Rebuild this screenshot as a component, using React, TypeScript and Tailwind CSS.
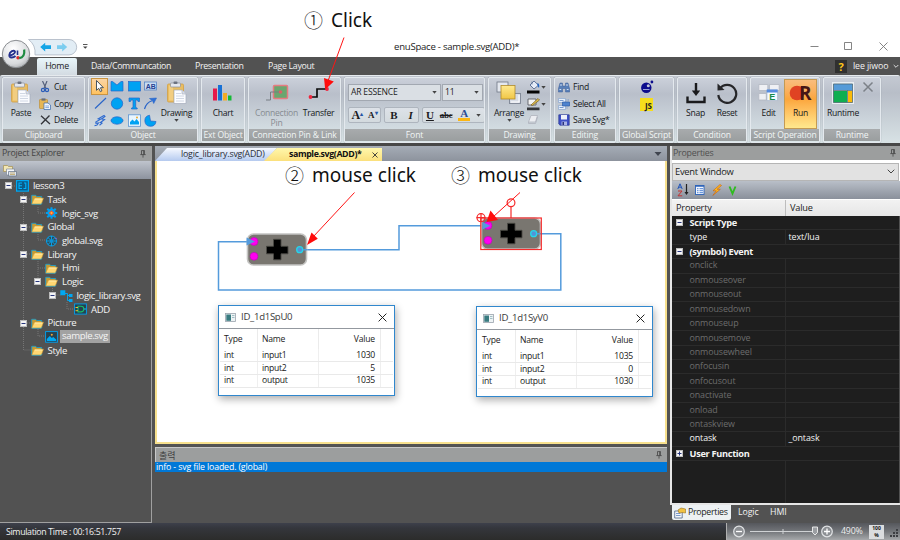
import React from "react";

type Kids = { children?: React.ReactNode };

/* ---------- icons ---------- */

const PasteIcon = () => (
  <svg width="22" height="24" viewBox="0 0 22 24">
    <rect x="1.5" y="3" width="16" height="18" rx="1.2" fill="#e9bd62" stroke="#d2a044" strokeWidth=".8" />
    <rect x="3" y="4.5" width="4" height="15" fill="#f2cd80" />
    <rect x="4.5" y="2" width="10" height="4" rx="1" fill="#e4e7ee" stroke="#8a8f9c" strokeWidth=".7" />
    <rect x="7.5" y=".6" width="4" height="2.4" rx="1" fill="#6c7280" />
    <path d="M8 9h8l4 4v9.500H8z" fill="#fbfcff" stroke="#a5acbb" strokeWidth=".7" />
    <path d="M16 9v4h4" fill="#d9deea" stroke="#a5acbb" strokeWidth=".6" />
    <path d="M10 12.500h5M10 15h8M10 17.500h8M10 20h8" stroke="#c7cedd" strokeWidth=".8" />
  </svg>
);

const CutIcon = () => (
  <svg width="10" height="12" viewBox="0 0 10 12">
    <path d="M2.500 0L6 7.500M7 0L4 7.500" stroke="#56617c" strokeWidth="1.200" fill="none" />
    <circle cx="3" cy="9" r="1.600" fill="none" stroke="#2a5cb8" strokeWidth="1.200" />
    <circle cx="7" cy="9" r="1.600" fill="none" stroke="#2a5cb8" strokeWidth="1.200" />
  </svg>
);

const CopyIcon = () => (
  <svg width="12" height="12" viewBox="0 0 12 12">
    <rect x=".5" y="1.500" width="8" height="9" rx=".6" fill="#e6b655" stroke="#b98a31" strokeWidth=".6" />
    <rect x="2.500" y=".4" width="4" height="2.200" fill="#676d7a" />
    <path d="M5 5h4l2.500 2v4.500H5z" fill="#f4f8ff" stroke="#3767a8" strokeWidth=".7" />
    <path d="M6.300 8h3.800M6.300 9.600h3.800" stroke="#5c8bcb" strokeWidth=".7" />
  </svg>
);

const DeleteIcon = () => (
  <svg width="11" height="10" viewBox="0 0 11 10">
    <path d="M1 .8L10 9M9.500 .5L1 9.300" stroke="#33353a" strokeWidth="1.300" fill="none" />
  </svg>
);

const Caret = ({ c = "#444" }: { c?: string }) => (
  <svg width="5" height="3" viewBox="0 0 5 3">
    <path d="M.3 0h4.400L2.500 2.800z" fill={c} />
  </svg>
);

const fillB = "#00a2f2";
const strokeB = "#2864c8";
const shapeIcons: React.ReactNode[] = [
  <path d="M4.500 1.500v9.800l2.300-2 1.600 3.400 1.500-.8-1.500-3.200h3z" fill="#fff" stroke="#345" strokeWidth=".9" />,
  <path d="M2 2.500h1.500L8 6l4-3.500h2v9.500H2z" fill={fillB} stroke={strokeB} strokeWidth=".7" />,
  <rect x="2.500" y="2.500" width="12" height="9.500" fill={fillB} stroke={strokeB} strokeWidth=".7" />,
  <g>
    <rect x="2.500" y="3" width="12" height="8" fill="#c9dcf1" stroke="#5884c6" strokeWidth=".8" />
    <text x="3.700" y="9.800" fontSize="7" fontWeight="700" fontFamily="Liberation Sans" fill="#243e92">AB</text>
  </g>,
  <path d="M3 12.500L14 2" stroke={strokeB} strokeWidth="1.100" />,
  <circle cx="8" cy="7.500" r="5.700" fill={fillB} stroke={strokeB} strokeWidth=".7" />,
  <path d="M3 2h10.500v3.500h-1.500L11.500 4H9.700v7.500l1.500.5v1H5.500v-1l1.500-.5V4H5l-.5 1.500H3z" fill={fillB} stroke={strokeB} strokeWidth=".7" />,
  <g>
    <path d="M2.500 13C4 8 6 6 10 4.800" fill="none" stroke={strokeB} strokeWidth="1.200" />
    <path d="M7.500 2.500L14.500 2l-2.800 5.500-1-2.600z" fill="#2b70d8" stroke={strokeB} strokeWidth=".6" />
  </g>,
  <path d="M2.500 12.800l2.500-.8 1.500-2-2.500.3L3.800 9 8.500 6.200 6.300 5.700 12 2.500l1 1L9.500 6l3 .5-4 3 1.500.7-2.500 2" fill="none" stroke="#2f6bd0" strokeWidth="1.100" />,
  <ellipse cx="8" cy="7.500" rx="6" ry="3.700" fill={fillB} stroke={strokeB} strokeWidth=".7" />,
  <g>
    <rect x="2.500" y="1.800" width="12" height="11.500" fill="#e8f6ff" stroke="#5c93ce" strokeWidth=".8" />
    <path d="M4 11.500V9l2.500-2.500 2 2L10.500 6l2.500 3v2.500z" fill={fillB} />
    <circle cx="11" cy="4.500" r="1" fill="#f0ab2c" />
  </g>,
  <path d="M7.500 2.200A5.600 5.600 0 1 0 14 8.500L8.500 8z" fill={fillB} stroke={strokeB} strokeWidth=".7" />,
];

const ChartIcon = () => (
  <svg width="22" height="18" viewBox="0 0 22 18">
    <path d="M1 4.500h4v12H1z" fill="#e6194b" />
    <path d="M6 1h4v15.500H6z" fill="#1771d6" />
    <path d="M11 9h4v7.500h-4z" fill="#f4ab23" />
    <path d="M16 11.500h3.500v5H16z" fill="#14ba34" />
  </svg>
);

const PinIcon = () => (
  <svg width="24" height="18" viewBox="0 0 24 18">
    <rect x="8.500" y="1.500" width="14" height="13" rx="1" fill="#6aa66f" stroke="#e67b80" strokeWidth="1.500" />
    <path d="M1 16h4.500V8H15" stroke="#777d83" strokeWidth="1" fill="none" />
    <circle cx="15.500" cy="8" r="1.800" fill="#db6167" />
  </svg>
);

const TransferIcon = () => (
  <svg width="22" height="14" viewBox="0 0 22 14">
    <path d="M2 11h7V3h9" stroke="#0b0b0b" strokeWidth="1.700" fill="none" />
    <circle cx="2.500" cy="11" r="1.900" fill="#f0243c" />
    <circle cx="19" cy="3" r="1.900" fill="#f0243c" />
  </svg>
);

const ArrangeIcon = () => (
  <svg width="26" height="24" viewBox="0 0 26 24">
    <defs>
      <linearGradient id="gold" x1="0" y1="0" x2="0" y2="1">
        <stop offset="0" stopColor="#ffe98f" />
        <stop offset="1" stopColor="#f0c645" />
      </linearGradient>
    </defs>
    <rect x="1" y="1" width="11" height="10" fill="#e4e8ef" stroke="#6f7785" strokeWidth=".8" />
    <rect x="13.500" y="12.500" width="11" height="10" fill="#d8dde6" stroke="#7c8492" strokeWidth=".9" />
    <path d="M15 21h8v-7" stroke="#fff" fill="none" />
    <rect x="5" y="4.500" width="14" height="13.500" fill="url(#gold)" stroke="#b18b2b" strokeWidth=".8" />
  </svg>
);

const FillIcon = () => (
  <svg width="13" height="14" viewBox="0 0 13 14">
    <path d="M3 5l4-4 4.500 4.200L7 9z" fill="#e4ebf7" stroke="#546a91" strokeWidth=".9" />
    <path d="M5 1.500v3" stroke="#546a91" strokeWidth=".8" />
    <path d="M10.500 3c2 .4 2 3 1.500 5-1-1-2-3-1.500-5z" fill="#1e63c4" />
    <path d="M0 10.500h12.500v3H0z" fill="#060606" />
  </svg>
);

const LineIcon = () => (
  <svg width="13" height="14" viewBox="0 0 13 14">
    <path d="M1 2h8v6H1z" fill="#f4f4f4" stroke="#5d6068" strokeWidth=".9" />
    <path d="M4 8l7-6.500 1.500 1.500-7 5.500z" fill="#e3c14c" stroke="#725d25" strokeWidth=".7" />
    <path d="M0 10.500h12.500v2.700H0z" fill="#34363a" />
  </svg>
);

const EffectIcon = () => (
  <svg width="12" height="11" viewBox="0 0 12 11">
    <path d="M4 1.500h6.500L8.500 8H1.500z" fill="#eceef2" stroke="#aeb3bc" strokeWidth=".8" />
    <path d="M1.500 8v1.500h7l2-6.500" fill="none" stroke="#aeb3bc" strokeWidth=".8" />
  </svg>
);

const FindIcon = () => (
  <svg width="12" height="11" viewBox="0 0 12 11">
    <path d="M2 1h2.500v3H7.500V1H10l1.700 6v3H7.500V6.500h-3V10H.3V7z" fill="#587fb8" stroke="#3f5f97" strokeWidth=".5" />
    <path d="M1.500 7.500h1.700M8.800 7.500h1.700M3 2v2M9 2v2" stroke="#dce9fb" strokeWidth=".9" />
  </svg>
);

const SelectAllIcon = () => (
  <svg width="12" height="12" viewBox="0 0 12 12">
    <path d="M.5 .5h7v4h-7zM.5 7.500h7v4h-7z" fill="#e6effb" stroke="#89a6ce" strokeWidth=".7" />
    <path d="M4.500 4h7v4h-7z" fill="#4e83ce" stroke="#2d5ca6" strokeWidth=".7" />
    <path d="M1.500 2.500h4M1.500 9.500h4" stroke="#6b91c8" strokeWidth=".9" />
    <path d="M9 1v2M10.500 1v2M9 9v2" stroke="#8aa6ce" strokeWidth=".7" />
  </svg>
);

const SaveIcon = () => (
  <svg width="12" height="12" viewBox="0 0 12 12">
    <path d="M.8 .8h10.400v10.400H2L.8 10z" fill="#3e50c6" stroke="#2a3690" strokeWidth=".7" />
    <path d="M3 1h6v4.500H3z" fill="#eef1fa" />
    <path d="M3.500 7.500h5.500v3.700H3.500z" fill="#aab4e6" />
    <path d="M4.500 8h1.500v3H4.500z" fill="#27307b" />
  </svg>
);

const LuaIcon = () => (
  <svg width="14" height="14" viewBox="0 0 14 14">
    <circle cx="6.300" cy="7.800" r="5.200" fill="#0c0c8c" />
    <circle cx="8.300" cy="5.700" r="1.500" fill="#c3c8d6" />
    <circle cx="11.900" cy="2" r="1.400" fill="#0c0c8c" />
    <path d="M3 9.500h6.500" stroke="#9aa0d6" strokeWidth="1.100" />
  </svg>
);

const SnapIcon = () => (
  <svg width="20" height="22" viewBox="0 0 20 22">
    <path d="M1.500 14.500v5.500h17v-5.500" stroke="#1a1a1c" strokeWidth="2.400" fill="none" />
    <path d="M10 1v9" stroke="#1a1a1c" strokeWidth="2.400" />
    <path d="M5.800 8.500h8.400L10 14z" fill="#1a1a1c" />
  </svg>
);

const ResetIcon = () => (
  <svg width="22" height="22" viewBox="0 0 22 22">
    <path d="M4 6.500A9 9 0 1 1 2.300 13" stroke="#262629" strokeWidth="2.200" fill="none" />
    <path d="M1.500 1.500L8.500 8l-7 .5z" fill="#262629" />
  </svg>
);

const EditIcon = () => (
  <svg width="22" height="20" viewBox="0 0 22 20">
    <path d="M.8 1.500h9v6h-9zM11.500 1.500h9.700v6h-9.700zM.8 10.500h7.500v6.500H.8z" fill="#eff0f4" stroke="#b3b8c1" strokeWidth=".8" />
    <path d="M9 7h10.500v10.500H9z" fill="#f4f9ff" stroke="#a6b4c8" strokeWidth=".6" />
    <path d="M8.700 6.500h11v3h-11z" fill="#568ce0" />
    <text x="11.200" y="17" fontSize="9" fontWeight="700" fontFamily="Liberation Sans" fill="#178a4a">E</text>
  </svg>
);

const RunIcon = () => (
  <svg className="overflow-visible" width="23" height="24" viewBox="0 -2 23 24">
    <circle cx="8" cy="10" r="7.300" fill="#e04323" />
    <text x="10" y="17.300" fontSize="20" fontWeight="700" fontFamily="Open Sans" textLength="12.500" lengthAdjust="spacingAndGlyphs" fill="#451616">R</text>
  </svg>
);

const RuntimeIcon = () => (
  <svg width="22" height="22" viewBox="0 0 22 22">
    <rect x=".5" y=".5" width="21" height="21" fill="#d8e2ea" stroke="#e9eef2" />
    <path d="M1.500 2h19v6h-19z" fill="#559bd8" />
    <path d="M1.500 9h13.500v11.500H1.500z" fill="#10ae50" />
    <path d="M16 9h4.500v11.500H16z" fill="#fbba08" />
    <path d="M1.500 2h19v18.500h-19zM1.500 8.500h19M15.500 8.500v12" stroke="#48606c" strokeWidth=".7" fill="none" />
  </svg>
);

const Pin = ({ c = "#444" }: { c?: string }) => (
  <svg width="6" height="8" viewBox="0 0 6 8">
    <path d="M1.500 .5v4M4.400 .5v4M1.500 .6h3M3.700 .6v4M.3 4.600h5.400M3 4.600v3" stroke={c} strokeWidth=".8" fill="none" />
  </svg>
);

const Folder = () => (
  <svg width="13" height="11" viewBox="0 0 13 11">
    <path d="M.7 9.700V1.300h4l1 1.200h5v2" fill="#c69a34" stroke="#1d9cc8" strokeWidth=".9" />
    <path d="M.8 10L3.300 4.200H12.500L10.300 10z" fill="#ffd773" stroke="#d49b2b" strokeWidth=".5" />
    <path d="M4 5h7.300" stroke="#fff3c0" strokeWidth=".8" />
    <path d="M.5 10.300h9.800l.8-1.500" stroke="#32b1d8" strokeWidth=".7" fill="none" />
  </svg>
);

const treeIcons: Record<string, React.ReactNode> = {
  root: (
    <svg width="13" height="12" viewBox="0 0 13 12">
      <rect x=".6" y=".6" width="11.800" height="10.500" fill="#0c5b86" stroke="#00a8f3" strokeWidth="1.200" />
      <path d="M6 3H3v5.500h3M3 5.700h3M8 3h1.800v5.500H7.500" stroke="#00b4ff" strokeWidth="1.100" fill="none" />
    </svg>
  ),
  folder: <Folder />,
  gear: (
    <svg width="13" height="12" viewBox="0 0 13 12">
      <path d="M6.500 .3v11.400M.8 6h11.400M2.300 1.800l8.400 8.400M10.700 1.800l-8.400 8.400" stroke="#009ff0" strokeWidth="2" />
      <circle cx="6.500" cy="6" r="4.200" fill="#009ff0" />
      <path d="M6.500 3.300L9.300 6 6.500 8.700 3.700 6z" fill="#f45b2a" />
      <circle cx="6.500" cy="6" r="1" fill="#ffc043" />
    </svg>
  ),
  globe: (
    <svg width="13" height="12" viewBox="0 0 13 12">
      <circle cx="6.500" cy="6" r="5" fill="#304a57" stroke="#00a2f2" strokeWidth="1" />
      <path d="M6.500 1v10M1.500 6h10M3 2.500l7 7M10 2.500l-7 7" stroke="#08a9ee" strokeWidth=".9" />
      <circle cx="6.500" cy="6" r="1.800" fill="#0c91d8" />
      <circle cx="11" cy="3.500" r=".8" fill="#9a5ad0" />
    </svg>
  ),
  lib: (
    <svg width="13" height="12" viewBox="0 0 13 12">
      <path d="M.3 .3h5v5h-5zM9 4h3.500v3H9zM9 9h3.500v3H9z" fill="#00a8f3" />
      <path d="M5 3.500h2.500v7H9M7.500 5.500H9" stroke="#00a8f3" strokeWidth=".9" fill="none" />
    </svg>
  ),
  gate: (
    <svg width="13" height="12" viewBox="0 0 13 12">
      <rect x=".6" y=".9" width="11.800" height="10.200" fill="#24414f" stroke="#00a2f2" strokeWidth=".9" />
      <path d="M4 3.300h3a2.800 2.800 0 0 1 0 5.600H4z" fill="none" stroke="#1abf6a" strokeWidth="1.100" />
      <path d="M1.500 4.500H4M1.500 7.700H4" stroke="#e8c534" strokeWidth="1" />
      <path d="M10 6h2" stroke="#16b4f5" strokeWidth="1" />
    </svg>
  ),
  pic: (
    <svg width="13" height="12" viewBox="0 0 13 12">
      <rect x=".6" y=".6" width="11.800" height="10.600" fill="#28424f" stroke="#00a2f2" strokeWidth=".9" />
      <path d="M1.800 10V8l3-3 2 2 1.500-1 2.900 2.500V10z" fill="#00a8f3" />
      <circle cx="6.800" cy="3.800" r="1" fill="#f0a93c" />
    </svg>
  ),
};

/* ---------- ribbon ---------- */

function Group({ w, title, children, last }: Kids & { w: string; title: string; last?: boolean }) {
  return (
    <section
      className={`${w} flex shrink-0 flex-col overflow-hidden rounded-[2px] border border-[#e4e9ee] bg-linear-to-b from-[#cbd0da] via-[#b9bfca] via-25% to-[#dce7ea] shadow-[0_0_1px_#7d838c] ${last ? "" : "mr-[3px]"}`}
    >
      <div className="flex h-[51px] px-[2px]">{children}</div>
      <div className="flex h-[12px] items-center justify-center whitespace-nowrap bg-linear-to-b from-[#a8abad] to-[#9a9e9f] text-[8.6px] font-medium leading-none tracking-[-0.16px] text-[#f1f5f5]">
        {title}
      </div>
    </section>
  );
}

function Big({ w, icon, label, drop, dim }: { w: string; icon: React.ReactNode; label: string; drop?: boolean; dim?: boolean }) {
  return (
    <div className={`${w} flex shrink-0 flex-col items-center ${dim ? "text-[#868b91]" : "font-medium text-[#15171a]"}`}>
      <div className="mt-[2px] flex h-[25px] items-center justify-center">{icon}</div>
      <div className="mt-[3px] text-center text-[8.6px] leading-[10px] tracking-[-0.28px]">{label}</div>
      {drop && <div className="mt-px flex"><Caret /></div>}
    </div>
  );
}

function Small({ icon, label }: { icon: React.ReactNode; label: string }) {
  return (
    <div className="flex h-[16.6px] items-center gap-[3px] whitespace-nowrap text-[8.6px] font-medium leading-none tracking-[-0.3px] text-[#15171a]">
      <span className="flex w-[12px] justify-center">{icon}</span>
      {label}
    </div>
  );
}

function FontBox({ w, children }: Kids & { w: string }) {
  return (
    <div className={`${w} flex h-[17px] items-center justify-between border border-[#a2a8b1] bg-[#dadfe4] pl-[2px] pr-[3px] text-[8.6px] leading-none tracking-[-0.2px] text-[#222]`}>
      {children}
      <Caret />
    </div>
  );
}

function FontButtons({ w, children }: Kids & { w: string }) {
  return (
    <div className={`${w} flex h-[16px] items-center justify-around rounded-[2px] border border-[#aeb5be] bg-linear-to-b from-[#dde2e8] to-[#d3dade] font-['Liberation_Serif',serif] text-[11px] font-bold leading-none text-[#1b1b1e]`}>
      {children}
    </div>
  );
}

function Ribbon() {
  return (
    <div className="flex h-[68px] rounded-t-[2px] border-t border-[#e6eaee] bg-linear-to-b from-[#c4c9d2] via-[#b8bec8] via-25% to-[#d8e2e5] pl-[2px] pt-px">
      <Group w="w-[83px]" title="Clipboard">
        <div className="w-[34px] shrink-0"><Big w="w-[32px]" icon={<PasteIcon />} label="Paste" /></div>
        <div className="pt-px">
          <Small icon={<CutIcon />} label="Cut" />
          <Small icon={<CopyIcon />} label="Copy" />
          <Small icon={<DeleteIcon />} label="Delete" />
        </div>
      </Group>
      <Group w="w-[110px]" title="Object">
        <div className="grid h-[51px] w-[67px] shrink-0 grid-cols-4 grid-rows-3">
          {shapeIcons.map((s, i) => (
            <span key={i} className={i === 0 ? "border border-[#c99443] bg-linear-to-b from-[#fbd5a5] to-[#ffc25e]" : "border border-transparent"}>
              <svg width="16" height="15" viewBox="0 0 16 15">{s}</svg>
            </span>
          ))}
        </div>
        <Big w="w-[37px]" icon={<PasteIcon />} label="Drawing" drop />
      </Group>
      <Group w="w-[44px]" title="Ext Object">
        <Big w="w-[38px]" icon={<ChartIcon />} label="Chart" />
      </Group>
      <Group w="w-[93px]" title="Connection Pin & Link">
        <Big w="w-[51px]" icon={<PinIcon />} label="Connection Pin" dim />
        <Big w="w-[33px]" icon={<TransferIcon />} label="Transfer" />
      </Group>
      <Group w="w-[141px]" title="Font">
        <div className="flex flex-col gap-[6px] pl-px pt-[6px]">
          <div className="flex gap-px">
            <FontBox w="w-[93px]">AR ESSENCE</FontBox>
            <FontBox w="w-[41px]">11</FontBox>
          </div>
          <div className="flex gap-[3px]">
            <FontButtons w="w-[33px]">
              <span className="text-[12px]">A<sup className="text-[6px] text-[#2554a4]">▴</sup></span>
              <span className="text-[9px]">A<sup className="text-[6px] text-[#2554a4]">▾</sup></span>
            </FontButtons>
            <FontButtons w="w-[35px]">
              <span>B</span>
              <span className="italic">I</span>
            </FontButtons>
            <FontButtons w="w-[63px]">
              <span className="underline">U</span>
              <span className="text-[9px] tracking-[-0.3px] line-through">abc</span>
              <span className="border-b-[3px] border-[#fbb614] px-[2px] leading-[9px] text-[#2b4c94]">A</span>
              <Caret />
            </FontButtons>
          </div>
        </div>
      </Group>
      <Group w="w-[63px]" title="Drawing">
        <Big w="w-[36px]" icon={<ArrangeIcon />} label="Arrange" drop />
        <div className="flex flex-col gap-[3px] pt-[2px]">
          <div className="flex items-center gap-px"><FillIcon /><Caret /></div>
          <div className="flex items-center gap-px"><LineIcon /><Caret /></div>
          <EffectIcon />
        </div>
      </Group>
      <Group w="w-[62px]" title="Editing">
        <div className="pl-px pt-px">
          <Small icon={<FindIcon />} label="Find" />
          <Small icon={<SelectAllIcon />} label="Select All" />
          <Small icon={<SaveIcon />} label="Save Svg*" />
        </div>
      </Group>
      <Group w="w-[55px]" title="Global Script">
        <div className="flex w-full flex-col items-center gap-[4px] pt-[2px]">
          <LuaIcon />
          <div className="flex h-[13px] w-[13px] items-end justify-end bg-[#f6dd1c] pr-px font-['Open_Sans',sans-serif] text-[8px] font-bold leading-[10px] text-[#222]">JS</div>
        </div>
      </Group>
      <Group w="w-[70px]" title="Condition">
        <Big w="w-[31px]" icon={<SnapIcon />} label="Snap" />
        <Big w="w-[32px]" icon={<ResetIcon />} label="Reset" />
      </Group>
      <Group w="w-[70px]" title="Script Operation">
        <Big w="w-[31px]" icon={<EditIcon />} label="Edit" />
        <div className="mt-px w-[33px] border border-[#c39a54] bg-linear-to-b from-[#f9bd7d] via-[#fba63c] via-40% to-[#ffe88d]">
          <div className="-mt-[2px] flex justify-center"><Big w="w-[31px]" icon={<RunIcon />} label="Run" /></div>
        </div>
      </Group>
      <Group w="w-[58px]" title="Runtime" last>
        <Big w="w-[34px]" icon={<RuntimeIcon />} label="Runtime" />
        <svg className="ml-[2px] mt-[3px]" width="12" height="12" viewBox="0 0 12 12">
          <path d="M1.500 1.500l9 9M10.500 1.500l-9 9" stroke="#7c8188" strokeWidth="1.500" />
        </svg>
      </Group>
    </div>
  );
}

/* ---------- window header ---------- */

function TitleBar() {
  return (
    <header className="flex h-[57px] items-end bg-white">
      <div className="flex h-[19px] w-[394px] items-start pl-[28px]">
        <svg width="62" height="18" viewBox="28 38 62 18">
          <path d="M28.500 39.500H69a7.700 7.700 0 0 1 0 15.400H35q1-10-6.500-15.400z" fill="#e2edf5" stroke="#b3bcc7" strokeWidth=".9" />
          <path d="M40.200 47l5-4.300v2.500H51v3.700h-5.800v2.500z" fill="#14a5e6" />
          <path d="M67.200 47l-5-4.300v2.500H57v3.700h5.200v2.500z" fill="#7ccdef" />
          <path d="M83 44.500h4.500" stroke="#444" strokeWidth=".9" />
          <path d="M83 46.500h4.500l-2.200 2.300z" fill="#444" />
        </svg>
      </div>
      <div className="h-[17px] w-[414px] whitespace-nowrap text-[9.6px] leading-[14px] tracking-[-0.25px] text-[#1c1c1c]">enuSpace - sample.svg(ADD)*</div>
      <svg width="86" height="18" viewBox="808 39 86 18">
        <path d="M810.500 46.500h8M844.500 42.500h7v7h-7zM879.500 42.500l8 8M887.500 42.500l-8 8" stroke="#777" strokeWidth=".9" fill="none" />
      </svg>
    </header>
  );
}

function TabStrip() {
  return (
    <nav className="flex h-[18px] items-center bg-[#525252] text-[8.8px] font-medium leading-none tracking-[-0.32px] text-[#f2f2f2]">
      <div className="ml-[37px] flex h-[17px] w-[40px] items-center justify-center self-end rounded-t-[2px] bg-linear-to-b from-[#e9f6fa] to-[#d3dbe2] text-[#1d1d1f]">Home</div>
      <span className="ml-[14px] w-[104px] whitespace-nowrap">Data/Communcation</span>
      <span className="w-[73px]">Presentation</span>
      <span className="w-[567px]">Page Layout</span>
      <div className="flex h-[13px] w-[12px] items-center justify-center bg-[#303030] text-[11px] font-bold text-[#ffc61a]">?</div>
      <span className="ml-[6px] whitespace-nowrap tracking-[-0.1px]">lee jiwoo</span>
      <svg className="ml-[5px]" width="6" height="5" viewBox="0 0 6 5"><path d="M.7 1L3 3.300 5.300 1" stroke="#ddd" fill="none" /></svg>
    </nav>
  );
}

/* ---------- project explorer ---------- */

type Node = { l: number; t: string; i: string; box?: boolean; sel?: boolean };
const tree: Node[] = [
  { l: 0, t: "lesson3", i: "root", box: true },
  { l: 1, t: "Task", i: "folder", box: true },
  { l: 2, t: "logic_svg", i: "gear" },
  { l: 1, t: "Global", i: "folder", box: true },
  { l: 2, t: "global.svg", i: "globe" },
  { l: 1, t: "Library", i: "folder", box: true },
  { l: 2, t: "Hmi", i: "folder" },
  { l: 2, t: "Logic", i: "folder", box: true },
  { l: 3, t: "logic_library.svg", i: "lib", box: true },
  { l: 4, t: "ADD", i: "gate" },
  { l: 1, t: "Picture", i: "folder", box: true },
  { l: 2, t: "sample.svg", i: "pic", sel: true },
  { l: 1, t: "Style", i: "folder" },
];
const indent = ["pl-[5px]", "pl-[19.500px]", "pl-[34px]", "pl-[48.500px]", "pl-[63px]"];

const Expander = ({ plus }: { plus?: boolean }) => (
  <svg className="shrink-0" width="7" height="7" viewBox="0 0 7 7">
    <rect x=".5" y=".5" width="6" height="6" fill="#f4f4f4" stroke="#bcbcbc" />
    <path d={plus ? "M1.500 3.500h4M3.500 1.500v4" : "M1.500 3.500h4"} stroke="#26357c" />
  </svg>
);

function ProjectExplorer() {
  return (
    <aside className="mr-[3px] flex w-[152px] shrink-0 flex-col border-b border-r border-[#a0a0a0] bg-[#525252]">
      <div className="flex h-[15px] items-center justify-between bg-[#9c9e9e] pl-[2px] pr-[5px] text-[8.800px] leading-none tracking-[-0.2px] text-[#444]">
        Project Explorer
        <Pin />
      </div>
      <div className="h-[18px] bg-linear-to-b from-[#bfc4cd] to-[#8d939e] pl-[3px] pt-[3px]">
        <svg width="14" height="13" viewBox="0 0 14 13">
          <path d="M.5 1.500h4l1 1h4v5h-9z" fill="#f2e6b5" stroke="#a58f50" strokeWidth=".7" />
          <path d="M3.500 5h8v6h-8z" fill="#f4f6fa" stroke="#7d8695" strokeWidth=".7" />
          <path d="M5.500 7.500h8v4.500h-8z" fill="#dfe6f0" stroke="#667183" strokeWidth=".7" />
          <path d="M7 9h5M7 10.500h5" stroke="#ba9a4d" strokeWidth=".7" />
        </svg>
      </div>
      <div className="relative">
        <svg className="absolute left-0 top-0" width="152" height="180" viewBox="0 0 152 180">
          <path d="M23.500 14v157H31M38 28v6h8M38 55v6h8M38 82v20M38 89h8M52.500 109v7h9M67 123v7h8M38 150v7h8M12 7h5M27 20h4M27 48h4M27 75h4M27 144h4" stroke="#808080" strokeWidth=".8" strokeDasharray="1 1" fill="none" />
        </svg>
        {tree.map((n) => (
          <div key={n.t} className={`relative flex h-[13.72px] items-center whitespace-nowrap text-[9.600px] leading-none tracking-[-0.38px] text-[#f4f4f4] ${indent[n.l]}`}>
            <span className="w-[11px] shrink-0">{n.box && <Expander />}</span>
            <span className="w-[15px] shrink-0">{treeIcons[n.i]}</span>
            <span className={n.sel ? "bg-[#a2a2a2] px-[2px] pb-[2px] pt-px" : "px-[2px]"}>{n.t}</span>
          </div>
        ))}
      </div>
    </aside>
  );
}

/* ---------- canvas ---------- */

const Block = ({ x, y }: { x: number; y: number }) => (
  <g transform={`translate(${x} ${y})`}>
    <rect x=".5" y=".5" width="59" height="31" rx="6" fill="#797670" stroke="#c4c4c2" strokeWidth="1.600" />
    <path d="M26.500 5.800h7.500v7h7v7.500h-7v6h-7.500v-6h-7v-7.500h7z" fill="#000" stroke="#494844" strokeWidth=".9" />
    <circle cx="7" cy="8" r="3.900" fill="#ff00f0" stroke="#c000b8" strokeWidth=".6" />
    <circle cx="7" cy="22.800" r="3.900" fill="#ff00f0" stroke="#c000b8" strokeWidth=".6" />
    <circle cx="52.700" cy="16.200" r="3" fill="#5294d8" stroke="#25d7e8" strokeWidth="1.300" />
  </g>
);

function DataWindow({ pos, title, rows }: { pos: string; title: string; rows: string[][] }) {
  return (
    <div className={`absolute ${pos} h-[91px] w-[177px] border border-[#3087cd] bg-white shadow-[1px_3px_8px_#0005]`}>
      <div className="flex h-[23px] items-center border-b border-[#93989f] pl-[6px] pr-[7px] text-[9.600px] leading-none tracking-[-0.3px] text-[#3a3a3a]">
        <svg className="mr-[5px]" width="11" height="9" viewBox="0 0 11 9">
          <rect x=".5" y=".5" width="10" height="8" fill="#eef3f5" stroke="#9aa4ad" strokeWidth=".8" />
          <rect x="1.300" y="1.500" width="4.700" height="6.300" fill="#397b80" />
          <path d="M7 2.500h2.500M7 4.500h2.500" stroke="#8db1b8" strokeWidth=".8" />
        </svg>
        {title}
        <svg className="ml-auto" width="9" height="9" viewBox="0 0 9 9"><path d="M.6 .6l7.800 7.800M8.400 .6L.6 8.400" stroke="#222" strokeWidth="1" /></svg>
      </div>
      <div className="mx-px flex h-[20px] items-center text-[8.6px] leading-none tracking-[-0.2px] text-[#222]">
        <span className="flex h-full w-[38px] items-center border-r border-[#ebebeb] pl-[4px]">Type</span>
        <span className="flex h-full w-[61px] items-center border-r border-[#ebebeb] pl-[4px]">Name</span>
        <span className="flex h-full w-[62px] items-center justify-end border-r border-[#ebebeb] pr-[5px]">Value</span>
      </div>
      {rows.map((r) => (
        <div key={r[1]} className="mx-px flex h-[12.900px] items-center border-b border-[#e9e9e9] text-[8.6px] leading-none tracking-[-0.25px] text-[#161616]">
          <span className="flex h-full w-[38px] items-center border-r border-[#efefef] pl-[4px]">{r[0]}</span>
          <span className="flex h-full w-[61px] items-center border-r border-[#efefef] pl-[4px]">{r[1]}</span>
          <span className="flex h-full w-[62px] items-center justify-end border-r border-[#efefef] pr-[5px]">{r[2]}</span>
        </div>
      ))}
    </div>
  );
}

function Canvas() {
  return (
    <div className="relative h-[283px] border-2 border-t-0 border-[#f7e08d] bg-white">
      <svg className="absolute left-0 top-0" width="509" height="280" viewBox="157 161 509 280">
        <g fill="none" stroke="#549bdc" strokeWidth="1.500">
          <path d="M541 233.800h19.800v56.200H218.500v-48.300h30" />
          <path d="M303 249.700h96v-24h85" />
        </g>
        <Block x={247} y={233.500} />
        <Block x={481} y={217.500} />
        <path d="M246.500 237.600l8.500 4-8.500 4zM482.500 222l8 3.800-8 3.800z" fill="#549bdc" />
        <path d="M303 249.700h4M537 233.800h5" stroke="#549bdc" strokeWidth="1.500" />
        <g fill="none" stroke="#f52b2b" strokeWidth="1.200">
          <rect x="480.800" y="218" width="60.500" height="31.500" />
          <path d="M511 218v-11.300M476.500 217.700h9M481 213.500v8.500" />
          <circle cx="511" cy="202.800" r="3.900" />
          <circle cx="481" cy="217.700" r="4" />
        </g>
      </svg>
      <DataWindow pos="left-[61px] top-[144px]" title="ID_1d1SpU0" rows={[["int", "input1", "1030"], ["int", "input2", "5"], ["int", "output", "1035"]]} />
      <DataWindow pos="left-[319px] top-[145px]" title="ID_1d1SyV0" rows={[["int", "input1", "1035"], ["int", "input2", "0"], ["int", "output", "1030"]]} />
    </div>
  );
}

function Workspace() {
  return (
    <main className="flex w-[512px] shrink-0 flex-col">
      <div className="flex h-[15px] items-end bg-linear-to-b from-[#a5acb6] to-[#8d939d] text-[8.8px] leading-none tracking-[-0.2px]">
        <div className="flex h-[13px] w-[122px] items-center bg-linear-to-b from-[#f6f9ff] to-[#b5caef] pl-[26px] text-[#2b2f38] [clip-path:polygon(12px_0,100%_0,110px_100%,0_100%)]">logic_library.svg(ADD)</div>
        <div className="-ml-[13px] flex h-[13px] w-[118px] items-center justify-between bg-linear-to-b from-[#fff7ab] to-[#fbe07c] pl-[25px] pr-[4px] font-bold tracking-[-0.38px] text-[#111] [clip-path:polygon(13px_0,100%_0,100%_100%,0_100%)]">
          sample.svg(ADD)*
          <svg width="6" height="6" viewBox="0 0 6 6"><path d="M.5 .5l5 5M5.500 .5l-5 5" stroke="#333" strokeWidth=".9" /></svg>
        </div>
        <svg className="mb-[5px] ml-auto mr-[5px]" width="8" height="4" viewBox="0 0 8 4"><path d="M.5 0h7L4 4z" fill="#40454f" /></svg>
      </div>
      <Canvas />
      <div className="mt-[3px] flex h-[15px] items-center justify-between border-l border-t border-[#c8c8c8] bg-[#9c9e9e] pl-[3px] pr-[5px] font-['Noto_Sans_CJK_KR',sans-serif] text-[9px] leading-none text-[#404040]">
        출력
        <Pin />
      </div>
      <div className="flex h-[10px] items-center bg-[#0078d7] pl-px text-[8.8px] font-medium leading-none tracking-[-0.16px] text-white">info - svg file loaded. (global)</div>
      <div className="flex-1 bg-[#525252]" />
    </main>
  );
}

/* ---------- properties ---------- */

const props: [string, string, string][] = [
  ["h", "Script Type", ""],
  ["v", "type", "text/lua"],
  ["h", "(symbol) Event", ""],
  ["d", "onclick", ""],
  ["d", "onmouseover", ""],
  ["d", "onmouseout", ""],
  ["d", "onmousedown", ""],
  ["d", "onmouseup", ""],
  ["d", "onmousemove", ""],
  ["d", "onmousewheel", ""],
  ["d", "onfocusin", ""],
  ["d", "onfocusout", ""],
  ["d", "onactivate", ""],
  ["d", "onload", ""],
  ["d", "ontaskview", ""],
  ["v", "ontask", "_ontask"],
  ["p", "User Function", ""],
];

function Properties() {
  return (
    <aside className="ml-[3px] flex w-[230px] shrink-0 flex-col bg-[#525252]">
      <div className="flex h-[359px] flex-col border-b-2 border-l-2 border-[#e6e6e6]">
        <div className="flex h-[14px] items-center justify-between bg-[#9c9e9e] pl-px pr-[4px] text-[8.800px] leading-none tracking-[-0.2px] text-[#505050]">
          Properties
          <Pin />
        </div>
        <div className="flex h-[21px] items-center bg-white pr-px pt-[2px]">
          <div className="flex h-[18px] flex-1 items-center justify-between border border-[#b5b5b5] bg-[#e2e2e2] pl-[2px] pr-[3px] text-[9.400px] leading-none tracking-[-0.3px] text-[#1d1d1d]">
            Event Window
            <svg width="8" height="5" viewBox="0 0 8 5"><path d="M.7 .7L4 4 7.300 .7" stroke="#444" fill="none" /></svg>
          </div>
        </div>
        <div className="flex h-[18px] items-center bg-linear-to-b from-[#b9bfc8] to-[#8a909b] pl-[5px]">
          <svg width="64" height="16" viewBox="0 -1 64 16">
            <path d="M.8 6L3 .8 5.200 6M1.600 4.200h2.800" stroke="#1e53b8" strokeWidth="1" fill="none" />
            <path d="M1 8h4L1 12.800h4.200" stroke="#c43232" strokeWidth="1" fill="none" />
            <path d="M9.500 1v9.500" stroke="#222" strokeWidth="1.200" /><path d="M7.500 9h4l-2 3z" fill="#222" />
            <rect x="18.500" y="2.500" width="8.500" height="9" fill="#f4f8ff" stroke="#2b62b8" strokeWidth=".9" />
            <path d="M18.500 3h8.500" stroke="#2b62b8" strokeWidth="1.500" />
            <path d="M20 5.700h1.500M20 7.700h1.500M20 9.700h1.500M22.500 5.700h3.500M22.500 7.700h3.500M22.500 9.700h3.500" stroke="#3b75ce" strokeWidth=".9" />
            <path d="M43 1.500l-7 6.300h3.300l-3.500 4.700 7.500-6.200h-3.200L44.500 2.500z" fill="#ffba1d" stroke="#c45c10" strokeWidth=".6" />
            <path d="M52.500 3.500L55.500 10.500 58.500 3.500" stroke="#2fbb20" strokeWidth="1.900" fill="none" />
          </svg>
        </div>
        <div className="flex h-[17px] items-center border-t border-[#fff] bg-linear-to-b from-[#f2f2f2] to-[#e6e6e6] text-[9.200px] leading-none tracking-[-0.2px] text-[#222]">
          <span className="flex h-full w-[114px] items-center border-r border-[#bdbdbd] pl-[4px]">Property</span>
          <span className="pl-[4px]">Value</span>
        </div>
        <div className="mr-px flex flex-1 flex-col bg-[#1e1e1e] text-[8.900px] leading-none tracking-[-0.1px]">
          {props.map(([k, n, v]) => (
            <div key={n} className={`flex h-[14.42px] items-center whitespace-nowrap border-b border-[#2b2b2b] ${k === "d" ? "text-[#6d6d6d]" : "text-[#f4f4f4]"}`}>
              <span className="w-[17.500px] shrink-0 pl-[4px]">{(k === "h" || k === "p") && <Expander plus={k === "p"} />}</span>
              {k === "h" || k === "p" ? (
                <span className="text-[9.200px] font-bold tracking-[-0.3px]">{n}</span>
              ) : (
                <>
                  <span className="flex h-full w-[96px] items-center border-r border-[#2b2b2b]">{n}</span>
                  <span className="pl-[3px]">{v}</span>
                </>
              )}
            </div>
          ))}
          <div className="ml-[17.500px] w-[96px] flex-1 border-r border-[#2b2b2b]" />
        </div>
      </div>
      <div className="flex h-[15px] items-center pl-[2px] text-[8.800px] font-medium leading-none tracking-[-0.1px] text-[#f2f2f2]">
        <div className="flex h-[15px] w-[59px] items-center gap-[2px] rounded-b-[2px] bg-[#edf1f3] pl-[2px] text-[#1d1d1d]">
          <svg className="shrink-0" width="12" height="12" viewBox="0 0 12 12">
            <path d="M.7 4h7.500v7H.7z" fill="#f4f7fc" stroke="#4c6284" strokeWidth=".8" />
            <path d="M2 6.500h4.500M2 8.500h4.500" stroke="#5d83bf" strokeWidth=".8" />
            <path d="M4 3l3-2 4.500 1v4L8 5.500 5 6z" fill="#f1c242" stroke="#987020" strokeWidth=".6" />
          </svg>
          <span className="tracking-[-0.3px]">Properties</span>
        </div>
        <span className="ml-[7px] w-[32px]">Logic</span>
        <span>HMI</span>
      </div>
    </aside>
  );
}

/* ---------- status ---------- */

function StatusBar() {
  return (
    <footer className="flex h-[17px] items-center bg-linear-to-b from-[#3d404b] via-[#34363c] via-30% to-[#2c2c2b] text-[8.800px] leading-none text-[#f2f2f2]">
      <span className="w-[726px] pl-[6px] pt-px tracking-[-0.34px]">Simulation Time : 00:16:51.757</span>
      <div className="flex h-full w-[174px] items-center border-l border-[#b0b0b0] bg-linear-to-b from-[#55575c] via-[#73767a] to-[#a6a8aa] pl-[5px]">
        <svg width="104" height="15" viewBox="0 0 104 15">
          <path d="M18 7.500h65M51 5v5" stroke="#d0d2d4" strokeWidth="1" />
          <circle cx="7" cy="7.500" r="5.300" fill="#8c8f93" stroke="#e2e4e6" strokeWidth="1.200" />
          <path d="M4 7.500h6" stroke="#fff" strokeWidth="1.300" />
          <path d="M80.500 3h5v5.500L83 11l-2.500-2.500z" fill="#9b9ea2" stroke="#f0f0f0" strokeWidth=".9" />
          <circle cx="95" cy="7.500" r="5.300" fill="#8c8f93" stroke="#e2e4e6" strokeWidth="1.200" />
          <path d="M92 7.500h6M95 4.500v6" stroke="#fff" strokeWidth="1.300" />
        </svg>
        <span className="ml-[5px] w-[28px] tracking-[-0.2px] text-[#eee]">490%</span>
        <div className="flex h-[14px] w-[15px] flex-col items-center justify-center bg-[#dadcde] text-[5px] font-bold leading-[7px] text-[#111]">
          <span>100</span>
          <span>%</span>
        </div>
        <svg className="ml-auto mr-px mt-[3px]" width="10" height="10" viewBox="0 0 10 10">
          <path d="M7 1h2v2H7zM4 4h2v2H4zM7 4h2v2H7zM1 7h2v2H1zM4 7h2v2H4zM7 7h2v2H7z" fill="#3c3e42" />
        </svg>
      </div>
    </footer>
  );
}

/* ---------- annotations ---------- */

function Callout({ pos, mark, text }: { pos: string; mark: string; text: string }) {
  return (
    <div className={`absolute ${pos} flex items-center whitespace-nowrap font-['Noto_Sans',sans-serif] text-[19px] leading-[24px] text-[#111]`}>
      <span className="w-[27px] font-['Noto_Sans_CJK_KR',sans-serif] text-[19px] font-light">{mark}</span>
      {text}
    </div>
  );
}

export default function App() {
  return (
    <div className="relative flex h-[540px] w-[900px] flex-col overflow-hidden bg-[#525252] font-['Open_Sans','Noto_Sans_CJK_KR',sans-serif]">
      <TitleBar />
      <TabStrip />
      <Ribbon />
      <div className="h-[3px] bg-[#474747]" />
      <div className="flex h-[377px]">
        <ProjectExplorer />
        <Workspace />
        <Properties />
      </div>
      <StatusBar />

      <svg className="pointer-events-none absolute left-0 top-[38px]" width="34" height="32" viewBox="0 38 34 32">
        <defs>
          <radialGradient id="orb" cx=".4" cy=".3" r=".8">
            <stop offset="0" stopColor="#fff" />
            <stop offset=".7" stopColor="#d8dadd" />
            <stop offset="1" stopColor="#a4a7ab" />
          </radialGradient>
        </defs>
        <circle cx="16" cy="54" r="13.700" fill="url(#orb)" stroke="#8b8e92" />
        <path d="M8.500 55.300C12 55.500 15.500 53.500 15 51.500c-.8-2-5.500 0-5.700 3.500 0 3.500 4 3 6.200 1" fill="none" stroke="#24308d" strokeWidth="1.900" />
        <circle cx="18" cy="57.800" r="1.700" fill="#dd2b2b" />
        <path d="M24.200 49.500c.5 4-.5 8-5 8.700" fill="none" stroke="#1d8a40" strokeWidth="2.200" />
        <path d="M17.500 50.500v4.500" stroke="#24308d" strokeWidth="1.600" />
      </svg>

      <Callout pos="left-[304px] top-[8px]" mark="①" text="Click" />
      <Callout pos="left-[285px] top-[163px]" mark="②" text="mouse click" />
      <Callout pos="left-[451px] top-[163px]" mark="③" text="mouse click" />
      <svg className="pointer-events-none absolute left-0 top-0" width="900" height="300" viewBox="0 0 900 300">
        <path d="M344 37.500L328 81M354.500 192.500L313 237M520 192.500L493 217" stroke="#ff1414" strokeWidth="1" />
        <path d="M324 78l9.800 3.600L325.200 89.500zM311.500 232.500l6.300 6.300L307 245zM490.500 210.500l7.500 9.500-11.500 2z" fill="#ff0c0c" />
      </svg>
    </div>
  );
}
